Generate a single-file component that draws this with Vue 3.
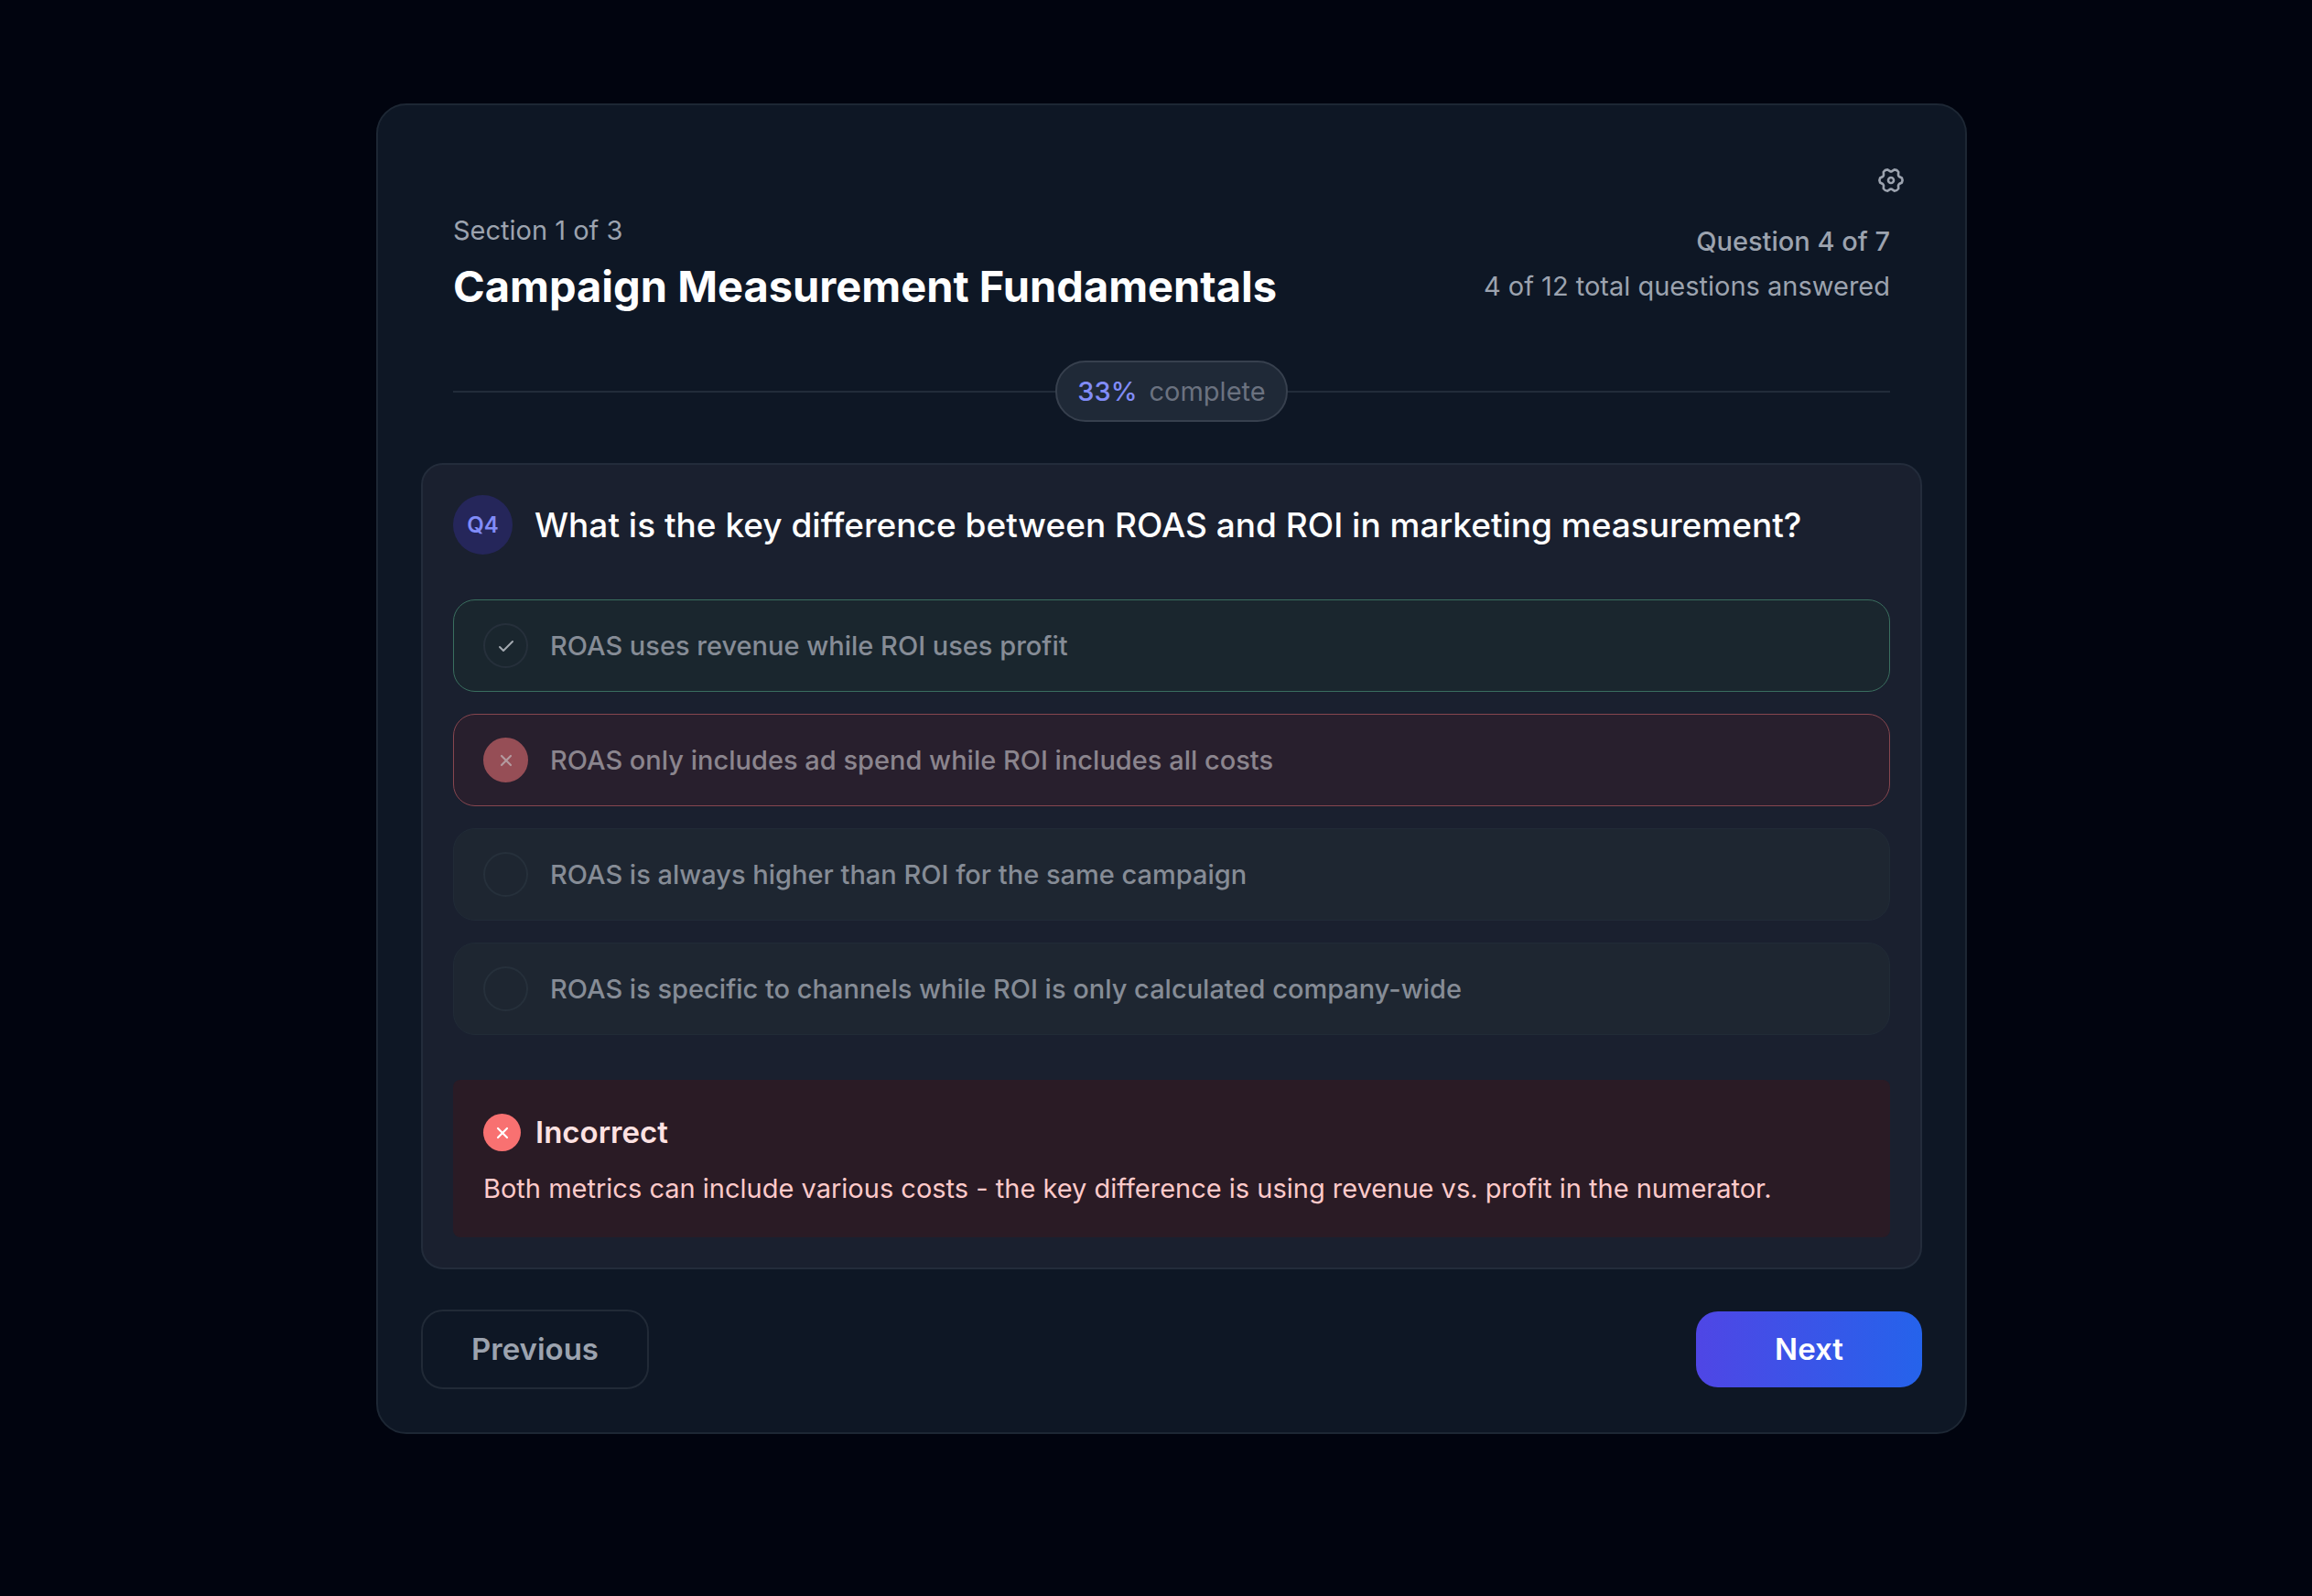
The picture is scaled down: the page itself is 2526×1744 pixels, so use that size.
<script setup>
import { computed, ref } from 'vue';

const section = { index: 1, total: 3, title: 'Campaign Measurement Fundamentals' };
const questionIndex = 4;
const questionsInSection = 7;
const answered = 4;
const totalQuestions = 12;

const options = [
  { id: 'a', label: 'ROAS uses revenue while ROI uses profit', state: 'correct' },
  { id: 'b', label: 'ROAS only includes ad spend while ROI includes all costs', state: 'wrong' },
  { id: 'c', label: 'ROAS is always higher than ROI for the same campaign', state: 'idle' },
  { id: 'd', label: 'ROAS is specific to channels while ROI is only calculated company-wide', state: 'idle' },
];
const selected = ref('b');

const percent = computed(() => Math.round((answered / totalQuestions) * 100));
</script>

<template>
  <main class="page">
    <section class="quiz">
      <div class="toolbar">
        <button class="icon-btn" type="button" aria-label="Settings">
          <svg class="gear" viewBox="-16 -16 32 32" aria-hidden="true">
            <path
              d="M11.9 -2.5Q13.3 0 11.9 2.5L9 4Q8.2 4.7 8 5.8L8.2 9.1Q6.6 11.5 3.8 11.6L1 9.8Q0 9.4 -1 9.8L-3.8 11.6Q-6.6 11.5 -8.2 9.1L-8 5.8Q-8.2 4.7 -9 4L-11.9 2.5Q-13.3 0 -11.9 -2.5L-9 -4Q-8.2 -4.7 -8 -5.8L-8.2 -9.1Q-6.6 -11.5 -3.8 -11.6L-1 -9.8Q0 -9.4 1 -9.8L3.8 -11.6Q6.6 -11.5 8.2 -9.1L8 -5.8Q8.2 -4.7 9 -4Z"
            />
            <circle r="3" />
          </svg>
        </button>
      </div>

      <header class="header">
        <div class="stack">
          <p class="meta">Section {{ section.index }} of {{ section.total }}</p>
          <h1 class="title">{{ section.title }}</h1>
        </div>
        <div class="stack stack--end">
          <p class="meta meta--strong">Question {{ questionIndex }} of {{ questionsInSection }}</p>
          <p class="meta">{{ answered }} of {{ totalQuestions }} total questions answered</p>
        </div>
      </header>

      <div class="progress">
        <span class="pill"><span class="pill__value">{{ percent }}%</span> <span>complete</span></span>
      </div>

      <article class="question">
        <div class="question__head">
          <span class="badge">Q{{ questionIndex }}</span>
          <h2 id="question-text" class="question__text">
            What is the key difference between ROAS and ROI in marketing measurement?
          </h2>
        </div>

        <div class="options" role="radiogroup" aria-labelledby="question-text">
          <label
            v-for="option in options"
            :key="option.id"
            :for="`option-${option.id}`"
            :class="['option', `option--${option.state}`]"
          >
            <span class="mark">
              <input
                :id="`option-${option.id}`"
                v-model="selected"
                class="mark__input"
                type="radio"
                name="answer"
                :value="option.id"
                disabled
              />
              <svg v-if="option.state === 'correct'" class="glyph" viewBox="0 0 24 24" aria-hidden="true">
                <path d="M5 13l4 4L19 7" />
              </svg>
              <svg v-else-if="option.state === 'wrong'" class="glyph glyph--cross" viewBox="0 0 24 24" aria-hidden="true">
                <path d="M6 18L18 6M6 6l12 12" />
              </svg>
            </span>
            <span>{{ option.label }}</span>
          </label>
        </div>

        <div class="feedback">
          <div class="feedback__head">
            <span class="feedback__icon">
              <svg class="glyph glyph--cross" viewBox="0 0 24 24" aria-hidden="true">
                <path d="M6 18L18 6M6 6l12 12" />
              </svg>
            </span>
            <h3 class="feedback__title">Incorrect</h3>
          </div>
          <p class="feedback__text">
            Both metrics can include various costs - the key difference is using revenue vs. profit in the numerator.
          </p>
        </div>
      </article>

      <footer class="actions">
        <button class="btn btn--outline" type="button">Previous</button>
        <button class="btn btn--primary" type="button">Next</button>
      </footer>
    </section>
  </main>
</template>

<style>
body {
  margin: 0;
  background: #01040f;
}
</style>

<style scoped>
* {
  box-sizing: border-box;
}

h1,
h2,
h3,
p {
  margin: 0;
}

.page {
  min-height: 100vh;
  padding: 113px 0 113px 34px;
  font-family: 'Inter', system-ui, sans-serif;
  font-size: 29px;
  line-height: 41px;
  color: #9ca3af;
}

.quiz {
  max-width: 1738px;
  margin: 0 auto;
  padding: 47px;
  background: #0e1725;
  border: 2px solid #1d2734;
  border-radius: 33px;
}

.toolbar {
  display: flex;
  justify-content: flex-end;
}

.icon-btn {
  display: flex;
  align-items: center;
  justify-content: center;
  width: 68px;
  height: 69px;
  padding: 0;
  border: 0;
  border-radius: 16px;
  background: transparent;
  color: #9ca3af;
  cursor: pointer;
}

.gear {
  width: 32px;
  height: 32px;
  fill: none;
  stroke: currentColor;
  stroke-width: 2.6;
  stroke-linejoin: round;
}

/* Header */
.header {
  display: flex;
  align-items: center;
  justify-content: space-between;
  padding: 0 35px;
}

.stack {
  display: flex;
  flex-direction: column;
  gap: 8px;
}

.stack--end {
  text-align: right;
}

.meta--strong {
  font-weight: 500;
}

.title {
  font-size: 47px;
  line-height: 65px;
  font-weight: 700;
  color: #fff;
}

/* Progress divider */
.progress {
  display: flex;
  align-items: center;
  padding: 0 35px;
  margin: 49px 0 45px;
}

.progress::before,
.progress::after {
  content: '';
  flex: 1;
  height: 2px;
  background: #222c3a;
}

.pill {
  display: flex;
  gap: 13px;
  padding: 11px 22px;
  border: 2px solid #37404e;
  border-radius: 33px;
  background: #1f2937;
  color: #6b7280;
}

.pill__value {
  color: #818cf8;
  font-weight: 500;
}

/* Question card */
.question {
  padding: 33px;
  background: #1a202f;
  border: 2px solid #232c3b;
  border-radius: 24px;
}

.question__head {
  display: flex;
  align-items: center;
  gap: 24px;
}

.badge {
  display: flex;
  align-items: center;
  justify-content: center;
  flex: none;
  width: 65px;
  height: 65px;
  border-radius: 50%;
  background: #25265a;
  color: #818cf8;
  font-size: 24px;
  font-weight: 600;
}

.question__text {
  font-size: 37px;
  line-height: 49px;
  font-weight: 500;
  color: #fff;
}

.options {
  display: flex;
  flex-direction: column;
  gap: 24px;
  margin: 49px 0;
}

.option {
  display: flex;
  align-items: center;
  gap: 24px;
  padding: 25px 32px;
  border: 1px solid #212b37;
  border-radius: 24px;
  background: #1e2631;
  color: #868c96;
  font-weight: 500;
}

.option--correct {
  background: #1a262e;
  border-color: #3a6e5f;
}

.option--wrong {
  background: #281f2d;
  border-color: #86464f;
  color: #8b858e;
}

.mark {
  display: grid;
  place-items: center;
  flex: none;
  width: 49px;
  height: 49px;
}

.mark__input,
.mark .glyph {
  grid-area: 1 / 1;
}

.mark__input {
  appearance: none;
  width: 49px;
  height: 49px;
  margin: 0;
  border: 2px solid #26303b;
  border-radius: 50%;
}

.option--wrong .mark__input {
  border-color: #964e56;
  background: #964e56;
}

.glyph {
  width: 24px;
  height: 24px;
  fill: none;
  stroke: currentColor;
  stroke-width: 2;
  stroke-linecap: round;
  stroke-linejoin: round;
}

.glyph--cross {
  width: 20px;
  height: 20px;
  stroke-width: 2.6;
}

.option--correct .glyph {
  color: #a3a9b0;
}

.option--wrong .glyph {
  color: #b39a9f;
}

/* Feedback */
.feedback {
  display: flex;
  flex-direction: column;
  gap: 16px;
  padding: 33px;
  border-radius: 8px;
  background: #2a1b25;
}

.feedback__head {
  display: flex;
  align-items: center;
  gap: 16px;
}

.feedback__icon {
  display: flex;
  align-items: center;
  justify-content: center;
  width: 41px;
  height: 41px;
  border-radius: 50%;
  background: #f87171;
  color: #fff;
}

.feedback__title {
  font-size: 33px;
  line-height: 49px;
  font-weight: 600;
  color: #fee2e2;
}

.feedback__text {
  color: #fecaca;
}

/* Footer */
.actions {
  display: flex;
  align-items: center;
  justify-content: space-between;
  margin-top: 44px;
}

.btn {
  font-family: inherit;
  font-size: 33px;
  line-height: 49px;
  font-weight: 600;
  border: 0;
  border-radius: 24px;
  cursor: pointer;
}

.btn--outline {
  min-width: 249px;
  padding: 17px 32px;
  border: 2px solid #212a37;
  background: transparent;
  color: #9ca3af;
}

.btn--primary {
  min-width: 247px;
  padding: 17px 32px;
  background: linear-gradient(90deg, #4f46e5, #2563eb);
  color: #fff;
}
</style>
